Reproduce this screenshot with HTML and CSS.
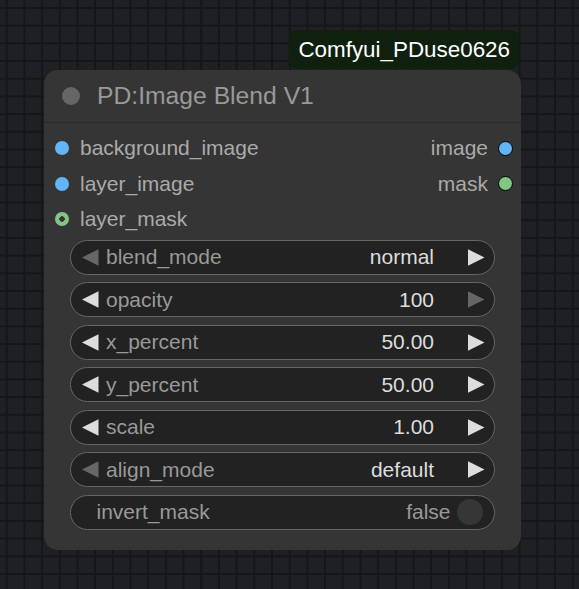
FILE: index.html
```html
<!DOCTYPE html>
<html>
<head>
<meta charset="utf-8">
<link rel="stylesheet" href="styles.css">
</head>
<body>
<div class="stage">
  <div class="badge">Comfyui_PDuse0626</div>
  <div class="node">
    <div class="title"><span class="tdot"></span><span class="ttext">PD:Image Blend V1</span></div>
    <div class="slots">
      <div class="slot-row">
        <div class="in"><span class="dot blue"></span>background_image</div>
        <div class="out">image<span class="dot blue outlined"></span></div>
      </div>
      <div class="slot-row">
        <div class="in"><span class="dot blue"></span>layer_image</div>
        <div class="out">mask<span class="dot green outlined"></span></div>
      </div>
      <div class="slot-row">
        <div class="in"><span class="dot green ring"></span>layer_mask</div>
      </div>
    </div>
    <div class="widgets">
      <div class="widget">
        <svg class="arrow left dim" viewBox="0 0 17 17"><polygon points="17,0 0,8.5 17,17"/></svg>
        <span class="label">blend_mode</span>
        <span class="value">normal</span>
        <svg class="arrow right" viewBox="0 0 17 17"><polygon points="0,0 17,8.5 0,17"/></svg>
      </div>
      <div class="widget">
        <svg class="arrow left" viewBox="0 0 17 17"><polygon points="17,0 0,8.5 17,17"/></svg>
        <span class="label">opacity</span>
        <span class="value">100</span>
        <svg class="arrow right dim" viewBox="0 0 17 17"><polygon points="0,0 17,8.5 0,17"/></svg>
      </div>
      <div class="widget">
        <svg class="arrow left" viewBox="0 0 17 17"><polygon points="17,0 0,8.5 17,17"/></svg>
        <span class="label">x_percent</span>
        <span class="value">50.00</span>
        <svg class="arrow right" viewBox="0 0 17 17"><polygon points="0,0 17,8.5 0,17"/></svg>
      </div>
      <div class="widget">
        <svg class="arrow left" viewBox="0 0 17 17"><polygon points="17,0 0,8.5 17,17"/></svg>
        <span class="label">y_percent</span>
        <span class="value">50.00</span>
        <svg class="arrow right" viewBox="0 0 17 17"><polygon points="0,0 17,8.5 0,17"/></svg>
      </div>
      <div class="widget">
        <svg class="arrow left" viewBox="0 0 17 17"><polygon points="17,0 0,8.5 17,17"/></svg>
        <span class="label">scale</span>
        <span class="value">1.00</span>
        <svg class="arrow right" viewBox="0 0 17 17"><polygon points="0,0 17,8.5 0,17"/></svg>
      </div>
      <div class="widget">
        <svg class="arrow left dim" viewBox="0 0 17 17"><polygon points="17,0 0,8.5 17,17"/></svg>
        <span class="label">align_mode</span>
        <span class="value">default</span>
        <svg class="arrow right" viewBox="0 0 17 17"><polygon points="0,0 17,8.5 0,17"/></svg>
      </div>
      <div class="widget toggle">
        <span class="label">invert_mask</span>
        <span class="value off">false</span>
        <span class="knob"></span>
      </div>
    </div>
  </div>
</div>
</body>
</html>
```
FILE: styles.css
```css
html, body {
  margin: 0;
  padding: 0;
}
body {
  width: 579px;
  height: 589px;
  overflow: hidden;
  background-color: #1f2024;
  background-image:
    linear-gradient(to right, #151619 2px, transparent 2px),
    linear-gradient(to bottom, #151619 2px, transparent 2px);
  background-size: 17.7px 17.7px;
  background-position: 5.7px 7px;
  font-family: "Liberation Sans", Arial, sans-serif;
}
.stage {
  padding: 30px 0 0 44px;
  width: 477px;
  display: flex;
  flex-direction: column;
}
.badge {
  align-self: flex-end;
  margin-right: 2px;
  margin-bottom: 1px;
  height: 39px;
  box-sizing: border-box;
  padding: 0 9px;
  display: flex;
  align-items: center;
  background: #0f200f;
  color: #fff;
  font-size: 22.4px;
  border-radius: 8px;
}
.node {
  width: 477px;
  height: 480px;
  box-sizing: border-box;
  background: #353535;
  border-radius: 14px;
  display: flex;
  flex-direction: column;
}
.title {
  height: 53px;
  box-sizing: border-box;
  border-bottom: 1px solid #2a2a2a;
  display: flex;
  align-items: center;
  padding-left: 17.5px;
  gap: 17.5px;
}
.tdot {
  width: 18px;
  height: 18px;
  border-radius: 50%;
  background: #666;
  flex: none;
}
.ttext {
  color: #999;
  font-size: 24.7px;
}
.slots {
  padding-top: 7.5px;
}
.slot-row {
  height: 35.5px;
  display: flex;
  align-items: center;
  justify-content: space-between;
  padding: 0 8px 0 10.5px;
  font-size: 21px;
  color: #aaa;
}
.in, .out {
  display: flex;
  align-items: center;
}
.in .dot { margin-right: 11.5px; }
.out .dot { margin-left: 10px; }
.dot {
  width: 14px;
  height: 14px;
  border-radius: 50%;
  flex: none;
  box-sizing: border-box;
}
.dot.blue { background: #64b5f6; }
.dot.green { background: #81c784; }
.dot.outlined {
  width: 15px;
  height: 15px;
  border: 1.5px solid #000;
}
.dot.ring {
  background: radial-gradient(circle, #353535 0 2.5px, #81c784 3px);
}
.widgets {
  padding: 2.5px 26px 0;
  display: flex;
  flex-direction: column;
  gap: 7.5px;
}
.widget {
  height: 35px;
  box-sizing: border-box;
  border: 1.5px solid #666;
  border-radius: 17.5px;
  background: #222;
  display: flex;
  align-items: center;
  font-size: 21px;
  padding: 0 9.5px 0 11px;
}
.arrow {
  width: 16.5px;
  height: 17px;
  flex: none;
  fill: #ddd;
}
.arrow.dim { fill: #666; }
.label {
  color: #999;
  margin-left: 7.5px;
}
.value {
  flex: 1;
  text-align: right;
  color: #ddd;
  margin-right: 34px;
}
.toggle {
  padding: 0 11.5px 0 25.5px;
}
.toggle .label { margin-left: 0; }
.toggle .value.off {
  color: #999;
  margin-right: 6px;
}
.knob {
  width: 26px;
  height: 26px;
  border-radius: 50%;
  background: #363636;
  flex: none;
}
```
